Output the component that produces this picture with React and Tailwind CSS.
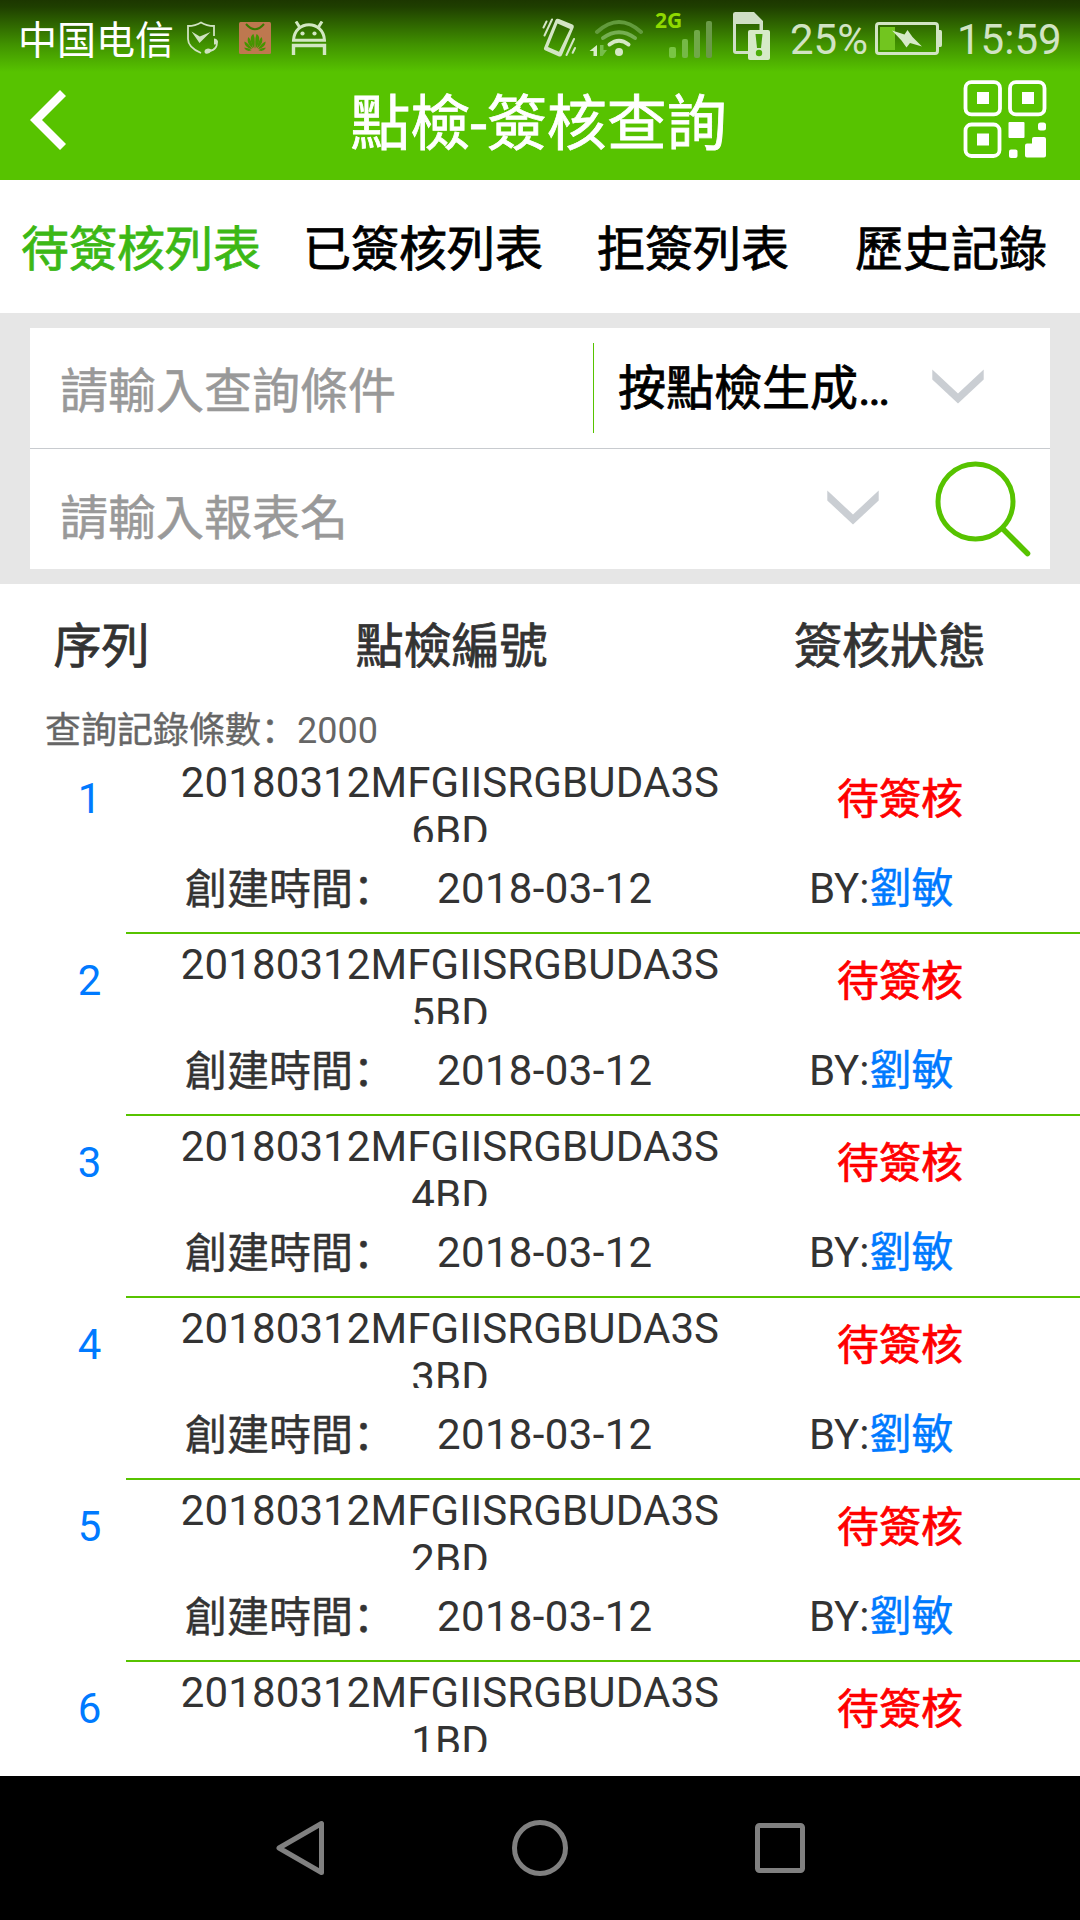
const rows = ['6BD', '5BD', '4BD', '3BD', '2BD', '1BD'];

const tabs = ['待簽核列表', '已簽核列表', '拒簽列表', '歷史記錄'];

function ShieldIcon() {
  return (
    <svg className="ml-[13px] h-[34px] w-[34px] shrink-0" viewBox="186 20 34 34" fill="none" stroke="#cfe2c0" strokeWidth="1.8">
      <path d="M214 35v-10c-5 0-9-1-13-3.500c-4 2.500-8 3.500-13 3.500v13c0 6 6 11 13 14" />
      <path d="M191.500 30.500l8.300 5l10.700-4.500l-11 11z" fill="#cfe2c0" stroke="none" />
      <path d="M216 39c2.500 6-1 10.500-7 11" />
      <path d="M214 37.500q3.500 0 4 3.500q-.5 3-4 2.500zM204.500 50.500q0-2.500 3.500-3q3.500 0 3.500 2.500q-2.500 3.500-6 2.500q-1-.5-1-2z" fill="#cfe2c0" stroke="none" />
    </svg>
  );
}

function HuaweiIcon() {
  return (
    <svg className="ml-[19px] h-8 w-8 shrink-0" viewBox="0 0 32 32">
      <rect width="32" height="32" rx="1.5" fill="#be784f" />
      <path d="M7 2q9 10.500 18 0" fill="none" stroke="#397a00" strokeWidth="2" />
      <g fill="#459500">
        <path d="M15.300 26.500C11 20 10.500 14 14.500 12q2 5 .8 14.500zM16.700 26.500C21 20 21.500 14 17.500 12q-2 5-.8 14.500z" />
        <path d="M14 26.500C9 23 7.500 18 9.500 15q3.500 4 4.500 11.500zM18 26.500c5-3.500 6.500-8.500 4.500-11.500q-3.500 4-4.500 11.500z" />
        <path d="M13 27.300C8 26 5 22.500 5.500 19.500q4.500 2 7.500 7.800zM19 27.300c5-1.300 8-4.800 7.500-7.800q-4.500 2-7.500 7.800z" />
        <path d="M12.500 28.300q-5 2-7.500-2.500q5-.5 7.500 2.500zM19.500 28.300q5 2 7.500-2.500q-5-.5-7.500 2.500z" />
      </g>
    </svg>
  );
}

function AndroidIcon() {
  return (
    <svg className="ml-[20px] h-[34px] w-[36px] shrink-0" viewBox="0 0 36 34" fill="none" stroke="#d3e7c2" strokeWidth="3">
      <path d="M2.500 19.300C3.500 -1.500 32.500 -1.500 33.500 19.300z" />
      <circle cx="11.500" cy="12.500" r="2.100" fill="#d3e7c2" stroke="none" />
      <circle cx="23.500" cy="12.500" r="2.100" fill="#d3e7c2" stroke="none" />
      <path d="M5 .5l3.500 5.500M31 .5l-3.500 5.500" />
      <path d="M2.500 34v-9.500h31V34" strokeWidth="3.400" />
    </svg>
  );
}

function VibrateIcon() {
  return (
    <svg className="h-[40px] w-[34px] shrink-0" viewBox="542 17 34 40" fill="#d3e5c4">
      <path fillRule="evenodd" d="M559 18l13.500 5.500q2 1 1.200 3L562 54q-1 2.200-3 1.400L545.500 49.500q-2.300-1-1.300-3L555.500 19q1-2 3.500-1zM557.500 22.500L548 46l11 4.800L570 28z" />
      <path d="M552 18.500l-7.500 16M546.500 20.500l-3 6M574 38l-7.500 16M575 47l-2.300 4.800" stroke="#d3e5c4" strokeWidth="2" strokeLinecap="round" />
    </svg>
  );
}

function WifiIcon() {
  return (
    <svg className="ml-[13px] h-[38px] w-[55px] shrink-0" viewBox="589 18 55 38" fill="none" strokeLinecap="round" strokeWidth="4">
      <path d="M597 31Q619 11 641 31" stroke="#629a3c" />
      <path d="M603 37Q619 25.500 635 37" stroke="#75ae51" />
      <path d="M609.500 43.500Q619 36 628.500 43.500" stroke="#d5e8c5" />
      <circle cx="619" cy="51" r="4" fill="#d5e8c5" />
      <path d="M597 44v11h-3.500v-5h-4z" fill="#d9edca" />
      <path d="M600 44v11h2.500l4.500-6h-3.500V44z" fill="#77bd4b" />
    </svg>
  );
}

function SimIcon() {
  return (
    <svg className="ml-[20px] mt-[-5px] h-[49px] w-[38px] shrink-0" viewBox="733 12 38 49">
      <path fill="#d0dfc5" fillRule="evenodd" d="M735.500 13H754l9 9v33h-27q-3 0-3-3V15q0-2 2.500-2zM736 25v27h23.500V25z" />
      <rect x="748" y="31" width="22" height="30" rx="2" fill="#d6eac8" />
      <path d="M755.500 35h7l-1.500 14h-4z" fill="#459c08" />
      <circle cx="759" cy="54" r="3.200" fill="#4dad08" />
    </svg>
  );
}

function BatteryIcon() {
  return (
    <svg className="ml-[6px] h-[34px] w-[68px] shrink-0" viewBox="874 21 68 34">
      <rect x="876.500" y="23.500" width="61" height="30" rx="2.500" fill="none" stroke="#d2e4c4" strokeWidth="3" />
      <path d="M938.500 30h2q1.500 0 1.500 2v13q0 2-1.500 2h-2z" fill="#d2e4c4" />
      <rect x="880" y="27" width="15" height="23" fill="#72c51f" />
      <path d="M892 30.500l12.500 4l3-4.500l5 7L922 46.500l-12-3.500l-3.500 4.500l-5-7z" fill="#d6e9c8" />
    </svg>
  );
}

function QrIcon() {
  return (
    <svg className="h-[80px] w-[84px]" viewBox="963 80 84 80" fill="none" stroke="#fff" strokeWidth="3.800">
      <rect x="965.500" y="82.200" width="34.500" height="32.200" rx="6" />
      <rect x="1010" y="82.200" width="34.500" height="32.200" rx="6" />
      <rect x="965.500" y="124.500" width="34" height="31.500" rx="6" />
      <g fill="#fff" stroke="none">
        <rect x="977" y="92" width="12" height="12" />
        <rect x="1022" y="92" width="12" height="12" />
        <rect x="977" y="133.500" width="12" height="12" />
        <rect x="1008.500" y="122" width="16" height="16" rx="1" />
        <rect x="1038" y="122.500" width="8" height="8" rx="2.500" />
        <rect x="1009" y="149.500" width="8.500" height="8.500" rx="2" />
        <path d="M1034 137h10q2 0 2 2v16.500q0 2-2 2h-17q-2 0-2-2v-10q0-2 2-2h5v-4.500q0-2 2-2z" />
      </g>
    </svg>
  );
}

function ChevronDown({ className }) {
  return (
    <svg className={'h-[35px] w-[52px] shrink-0 ' + className} viewBox="0 0 52 35" fill="#caced3">
      <path d="M.3.500L26 24.500 51.700.500v10L26 34.500.300 10.500z" />
    </svg>
  );
}

function Row({ index, suffix }) {
  return (
    <div className="flex h-[182px] shrink-0 text-[42px] leading-[49px] text-[#333]">
      <div className="w-[126px] shrink-0 pl-[53px] pt-[22px] text-center">
        <div className="w-[73px] text-[#007aff]">{index}</div>
      </div>
      <div className="w-[954px] border-b-2 border-[#57c300]">
        <div className="flex h-[90px]">
          <div className="h-[90px] w-[648px] overflow-hidden pt-[6px] text-center tracking-[0.1px]">
            20180312MFGIISRGBUDA3S
            <br />
            {suffix}
          </div>
          <div className="w-[252px] pt-[23px] text-center text-[#f00] [-webkit-text-stroke:0.7px]">待簽核</div>
        </div>
        <div className="flex h-[90px] whitespace-nowrap pt-[19px]">
          <div className="ml-[59px] w-[252px] [-webkit-text-stroke:0.4px]">
            創建時間<span className="font-['Noto_Sans_CJK_SC',sans-serif]" lang="zh-CN">：</span>
          </div>
          <div className="w-[372px] pt-[3px] tracking-[0.35px]">2018-03-12</div>
          <div className="pt-[3px]">
            BY:<span className="inline-block text-[#007aff] [-webkit-text-stroke:0.4px]">劉敏</span>
          </div>
        </div>
      </div>
    </div>
  );
}

export default function App() {
  return (
    <div className="flex h-[1920px] w-[1080px] flex-col overflow-hidden bg-white font-[Roboto,'Noto_Sans_CJK_TC',sans-serif]">
      <header className="flex h-[180px] shrink-0 flex-col bg-[#57c300] bg-[linear-gradient(to_bottom,#1c3700_0px,#1f3f00_7px,#419300_45px,#57c300_72px)]">
        <div className="flex h-[75px] items-center whitespace-nowrap">
          <span className="ml-[18px] mt-[-2px] w-[155px] font-['Noto_Sans_CJK_SC',sans-serif] text-[39px] leading-[60px] text-white">中国电信</span>
          <ShieldIcon />
          <HuaweiIcon />
          <AndroidIcon />
          <div className="ml-auto flex items-center">
            <VibrateIcon />
            <WifiIcon />
            <div className="ml-[11px] flex h-[48px] w-[58px] flex-col">
              <span className="font-['Noto_Sans',sans-serif] text-[21px] leading-[12px] font-bold text-[#8fd900]">2G</span>
              <div className="mt-[-5px] ml-[14px] flex h-[37px] items-end gap-[6px]">
                <i className="h-[11px] w-[7px] rounded-[2px] bg-[#79c544]" />
                <i className="h-[19px] w-[6px] rounded-[2px] bg-[#75b947]" />
                <i className="h-[28px] w-[6px] rounded-[2px] bg-[#70a948]" />
                <i className="h-[37px] w-[6px] rounded-[2px] bg-[#6a9a48]" />
              </div>
            </div>
            <SimIcon />
            <span className="ml-[19px] mt-[4px] w-[78px] text-[42px] leading-[60px] text-[#d1e3c3]">25%</span>
            <BatteryIcon />
            <span className="mr-[19px] ml-[15px] mt-[4px] w-[104px] text-[42px] leading-[60px] text-[#d1e3c3]">15:59</span>
          </div>
        </div>
        <div className="flex h-[105px] items-start justify-between pr-[33px] pl-[30px]">
          <svg className="mt-[15px] h-[60px] w-[36px]" viewBox="0 0 36 60" fill="#fff">
            <path d="M0 30L30 0l6 6-24 24 24 24-6 6z" />
          </svg>
          <h1 className="mt-[8px] ml-[48px] text-[60px] leading-[84px] text-white [-webkit-text-stroke:0.8px]">點檢-簽核查詢</h1>
          <div className="mt-[5px]">
            <QrIcon />
          </div>
        </div>
      </header>

      <nav className="grid h-[133px] shrink-0 grid-cols-[282px_282px_258px_258px] pt-[35px] text-center text-[48px] leading-[70px] text-black [-webkit-text-stroke:0.8px]">
        {tabs.map((tab, i) => (
          <span key={tab} className={i === 0 ? 'text-[#3cb815]' : ''}>
            {tab}
          </span>
        ))}
      </nav>

      <section className="h-[271px] shrink-0 bg-[#e6e6e6] px-[30px] py-[15px] text-[48px] leading-[70px]">
        <div className="h-[241px] bg-white">
          <div className="flex h-[121px] items-start border-b border-[#c8cbcf]">
            <span className="ml-[30px] mt-[29px] w-[533px] text-[#999] [-webkit-text-stroke:0.5px]">請輸入查詢條件</span>
            <div className="mt-[15px] h-[90px] w-px bg-[#57c300]" />
            <span className="ml-[24px] mt-[26px] w-[314px] text-black [-webkit-text-stroke:0.8px]">按點檢生成…</span>
            <ChevronDown className="mt-[41px]" />
          </div>
          <div className="flex h-[120px] items-start">
            <span className="ml-[30px] mt-[35px] w-[767px] text-[#999] [-webkit-text-stroke:0.5px]">請輸入報表名</span>
            <ChevronDown className="mt-[41px]" />
            <svg className="mt-[11px] ml-[56px] h-[98px] w-[97px] shrink-0" viewBox="0 0 97 98" fill="none" stroke="#57c300" strokeWidth="5">
              <circle cx="40.500" cy="41.500" r="37.500" />
              <path d="M67.500 68.500L92.500 93.500" strokeLinecap="round" strokeWidth="5.500" />
            </svg>
          </div>
        </div>
      </section>

      <div className="grid h-[118px] shrink-0 grid-cols-[203px_497px_380px] pt-[28px] text-center text-[48px] leading-[70px] text-[#333] [-webkit-text-stroke:0.8px]">
        <span>序列</span>
        <span>點檢編號</span>
        <span>簽核狀態</span>
      </div>
      <div className="h-[50px] shrink-0 pl-[45px] text-[36px] leading-[50px] text-[#666]">
        <span className="[-webkit-text-stroke:0.4px]">
          查詢記錄條數<span className="font-['Noto_Sans_CJK_SC',sans-serif]" lang="zh-CN">：</span>
        </span>
        2000
      </div>

      <main className="flex min-h-0 flex-1 flex-col overflow-hidden">
        {rows.map((suffix, i) => (
          <Row key={suffix} index={i + 1} suffix={suffix} />
        ))}
      </main>

      <footer className="flex h-[144px] shrink-0 items-center justify-between bg-black pr-[275px] pl-[276px]">
        <svg className="h-[56px] w-[49px]" viewBox="0 0 49 56" fill="none" stroke="#808080" strokeWidth="5" strokeLinejoin="round">
          <path d="M45.500 3.500v49L3 28z" />
        </svg>
        <svg className="h-[56px] w-[56px]" viewBox="0 0 56 56" fill="none" stroke="#808080" strokeWidth="5">
          <circle cx="28" cy="28" r="25.500" />
        </svg>
        <svg className="h-[50px] w-[50px]" viewBox="0 0 50 50" fill="none" stroke="#808080" strokeWidth="5">
          <rect x="2.500" y="2.500" width="45" height="45" rx="2" />
        </svg>
      </footer>
    </div>
  );
}
